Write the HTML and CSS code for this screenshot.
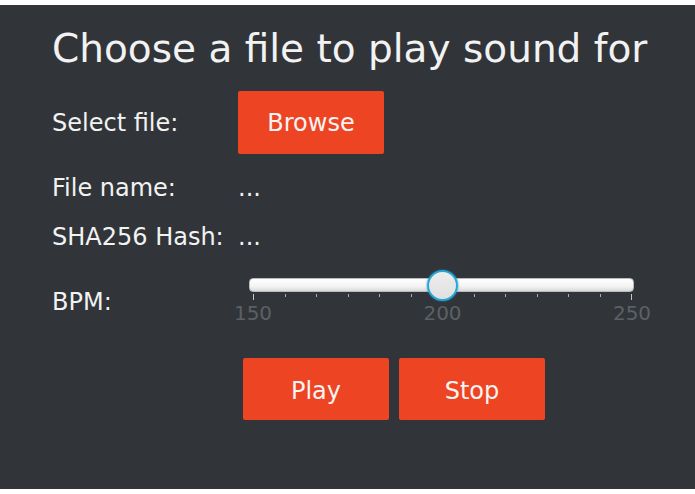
FILE: index.html
```html
<!DOCTYPE html>
<html lang="en">
<head>
    <meta charset="UTF-8">
    <meta name="viewport" content="width=device-width, initial-scale=1.0">
    <title>Sound Player</title>
    <link rel="stylesheet" href="styles.css">
</head>
<body>

    <div class="app">
        <h1>Choose a file to play sound for</h1>

        <div class="row row-file">
            <span class="label">Select file:</span>
            <button class="btn">Browse</button>
        </div>

        <div class="row row-text">
            <span class="label">File name:</span>
            <span class="value">...</span>
        </div>

        <div class="row row-text row-hash">
            <span class="label">SHA256 Hash:</span>
            <span class="value">...</span>
        </div>

        <div class="row row-bpm">
            <span class="label">BPM:</span>
            <div class="slider">
                <div class="track"></div>
                <div class="thumb"></div>
                <div class="ticks">
                    <i class="major"></i><i></i><i></i><i></i><i></i><i></i>
                    <i class="major"></i><i></i><i></i><i></i><i></i><i></i>
                    <i class="major"></i>
                </div>
                <div class="tick-labels">
                    <span>150</span>
                    <span>200</span>
                    <span>250</span>
                </div>
            </div>
        </div>

        <div class="actions">
            <button class="btn">Play</button>
            <button class="btn">Stop</button>
        </div>
    </div>

</body>
</html>
```

FILE: styles.css
```css
/* General Reset */
* {
    margin: 0;
    padding: 0;
    box-sizing: border-box;
}

body {
    font-family: "DejaVu Sans", sans-serif;
    background-color: #fff;
}

.app {
    margin-top: 5px;
    height: 484px;
    background-color: #313539;
    color: #f2f2f2;
    padding: 21px 0 0 52px;
}

h1 {
    font-size: 39px;
    font-weight: normal;
    line-height: 45px;
}

.row {
    display: flex;
    align-items: center;
}

.label {
    width: 186px;
    font-size: 24px;
    line-height: 28px;
}

.value {
    font-size: 24px;
    line-height: 28px;
}

.row-file {
    margin-top: 20px;
}

.row-text {
    margin-top: 20px;
}

.row-hash {
    margin-top: 21px;
}

.btn {
    width: 146px;
    height: 63px;
    background-color: #ed4524;
    border: none;
    border-radius: 2px;
    color: #f7f3f2;
    font-family: "DejaVu Sans", sans-serif;
    font-size: 24px;
}

.row-bpm {
    margin-top: 18px;
    align-items: flex-start;
}

.row-bpm .label {
    margin-top: 19px;
}

.slider {
    position: relative;
    margin-left: 11px;
    width: 385px;
    height: 52px;
    padding-top: 9px;
}

.track {
    height: 14px;
    border-radius: 4px;
    border: 1px solid #b9bbbd;
    background: linear-gradient(#ffffff, #f4f4f4 60%, #dadada);
}

.thumb {
    position: absolute;
    left: 178px;
    top: 1px;
    width: 31px;
    height: 31px;
    border-radius: 50%;
    border: 2px solid #29a6d6;
    background: linear-gradient(#ededed, #e0e0e0);
    box-shadow: 0 0 2px #1c8fc0;
}

.ticks {
    display: flex;
    justify-content: space-between;
    align-items: flex-start;
    padding: 2px 2px 0 4px;
}

.ticks i {
    width: 1px;
    height: 3px;
    background-color: #a9abad;
}

.ticks i.major {
    height: 6px;
    background-color: #c4c6c8;
}

.tick-labels {
    display: flex;
    justify-content: space-between;
    margin: 2px -18px 0 -16px;
}

.tick-labels span {
    width: 40px;
    text-align: center;
    font-size: 20px;
    line-height: 22px;
    color: #5c6065;
}

.actions {
    display: flex;
    gap: 10px;
    margin: 37px 0 0 191px;
}

.actions .btn {
    height: 62px;
    padding-top: 3px;
}
```
